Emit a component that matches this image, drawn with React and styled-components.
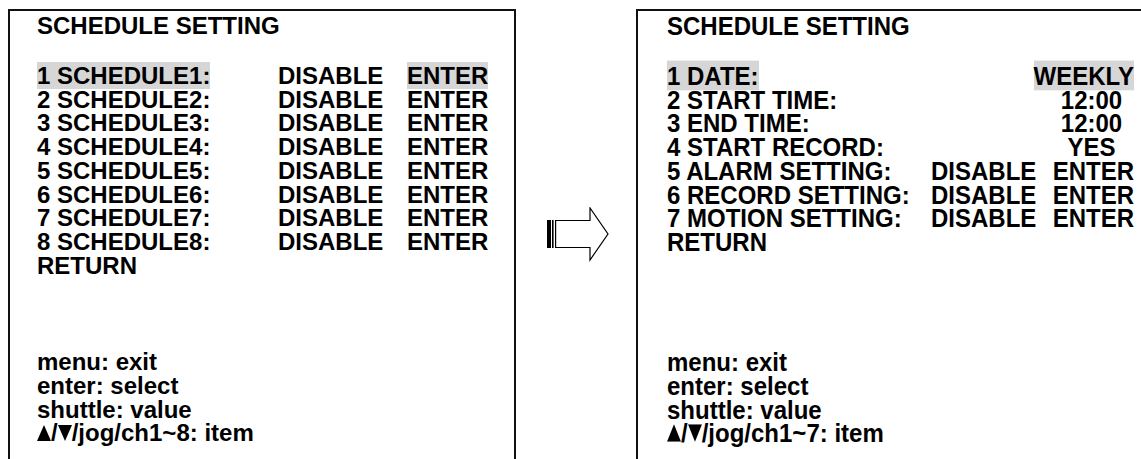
import React from "react";
import styled, { createGlobalStyle, css } from "styled-components";

const GlobalStyle = createGlobalStyle`
  html, body {
    margin: 0;
    padding: 0;
    background: #ffffff;
  }
  body {
    width: 1141px;
    height: 459px;
    overflow: hidden;
  }
`;

const leftRows = [1, 2, 3, 4, 5, 6, 7, 8].map(n => ({
  label: `${n} SCHEDULE${n}:`,
  value: "DISABLE",
  action: "ENTER",
}));

const rightRows = [
  { label: "1 DATE:", value: "", action: "WEEKLY" },
  { label: "2 START TIME:", value: "", action: "12:00", align: "center" },
  { label: "3 END TIME:", value: "", action: "12:00", align: "center" },
  { label: "4 START RECORD:", value: "", action: "YES", align: "center" },
  { label: "5 ALARM SETTING:", value: "DISABLE", action: "ENTER" },
  { label: "6 RECORD SETTING:", value: "DISABLE", action: "ENTER" },
  { label: "7 MOTION SETTING:", value: "DISABLE", action: "ENTER" },
];

function Triangle({ down }) {
  return (
    <TriangleIcon viewBox="0 0 14 16">
      <polygon points={down ? "0,0 14,0 7,16" : "7,0 14,16 0,16"} fill="#000" />
    </TriangleIcon>
  );
}

function Screen({ tall, rows, channels }) {
  return (
    <Panel tall={tall}>
      <Line tall={tall}>SCHEDULE SETTING</Line>
      <Menu tall={tall}>
        {rows.map((row, i) => (
          <React.Fragment key={row.label}>
            <Cell tall={tall}>
              <Text active={i === 0}>{row.label}</Text>
            </Cell>
            <Cell tall={tall}>{row.value}</Cell>
            <Action tall={tall} align={row.align}>
              <Text active={i === 0}>{row.action}</Text>
            </Action>
          </React.Fragment>
        ))}
        <Cell tall={tall}>RETURN</Cell>
      </Menu>
      <Help>
        <Line tall={tall}>menu: exit</Line>
        <Line tall={tall}>enter: select</Line>
        <Line tall={tall}>shuttle: value</Line>
        <Line tall={tall}>
          <Triangle />/<Triangle down />/jog/ch1~{channels}: item
        </Line>
      </Help>
    </Panel>
  );
}

function Arrow() {
  return (
    <ArrowIcon viewBox="0 0 66 56" width="66" height="56">
      <rect x="1" y="13" width="4" height="28" fill="#000" />
      <rect x="6" y="13" width="1.6" height="28" fill="#000" />
      <rect x="9" y="13" width="1.2" height="28" fill="#000" />
      <path
        d="M10 13.5 H44 V1 L62 27 L44 53 V40.5 H10"
        fill="none"
        stroke="#000"
        strokeWidth="1.2"
      />
    </ArrowIcon>
  );
}

export default function App() {
  return (
    <>
      <GlobalStyle />
      <Page>
        <Screen rows={leftRows} channels={8} />
        <Gap>
          <Arrow />
        </Gap>
        <Screen tall rows={rightRows} channels={7} />
      </Page>
    </>
  );
}

const Page = styled.div`
  display: flex;
  align-items: flex-start;
  padding: 9px 0 0 8px;
  height: 459px;
  box-sizing: border-box;
`;

const Panel = styled.section`
  box-sizing: border-box;
  height: 450px;
  width: 508px;
  flex-shrink: 0;
  border: 2px solid #111;
  border-bottom: 0;
  padding: 3px 0 14px 27px;
  display: flex;
  flex-direction: column;
  font-family: "Liberation Sans", Arial, sans-serif;
  font-weight: bold;
  font-size: 24px;
  line-height: 23.7px;
  color: #000;

  ${props =>
    props.tall &&
    css`
      width: 520px;
      border-right: 0;
      padding-left: 29px;
    `}
`;

const tallText = css`
  ${props =>
    props.tall &&
    css`
      transform: scaleY(1.1);
    `}
`;

const Line = styled.div`
  white-space: nowrap;
  ${tallText}
`;

const Menu = styled.div`
  display: grid;
  grid-template-columns: 241px 129px auto;
  margin-top: 26.3px;
  white-space: nowrap;

  ${props =>
    props.tall &&
    css`
      grid-template-columns: 264px 100px 103px;
    `}
`;

const Cell = styled.div`
  ${tallText}
`;

const Action = styled.div`
  ${tallText}
  ${props =>
    props.tall &&
    css`
      text-align: right;
    `}
  ${props =>
    props.align === "center" &&
    css`
      text-align: center;
      padding-left: 18px;
    `}
`;

const Text = styled.span`
  ${props =>
    props.active &&
    css`
      background: #d6d6d6;
    `}
`;

const Help = styled.div`
  margin-top: auto;
  white-space: nowrap;
`;

const TriangleIcon = styled.svg`
  display: inline-block;
  width: 14px;
  height: 16px;
  vertical-align: 0;
`;

const Gap = styled.div`
  width: 120px;
  flex-shrink: 0;
  display: flex;
  justify-content: center;
  padding-top: 198px;
  box-sizing: border-box;
`;

const ArrowIcon = styled.svg`
  display: block;
  margin-left: 6px;
`;
